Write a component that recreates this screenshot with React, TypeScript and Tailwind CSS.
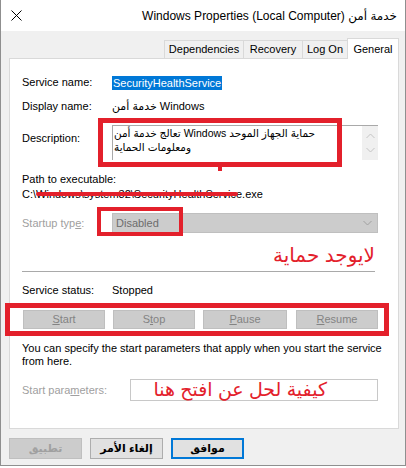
import React from "react";

const Btn = ({ w, children }: { w: string; children: React.ReactNode }) => (
  <div
    className={`${w} h-[19px] bg-[#cccccc] border border-[#bfbfbf] flex items-center justify-center text-[#838383]`}
  >
    {children}
  </div>
);

const App = () => {
  return (
    <div className="relative w-[406px] h-[468px] bg-white overflow-hidden text-[11px] text-black font-['Liberation_Sans','DejaVu_Sans',sans-serif]">
      <div className="h-[466px] bg-[#f0f0f0] border-x border-b border-[#8f8f8f] flex flex-col">
        {/* title bar */}
        <div className="h-[31px] bg-white flex items-center justify-between pl-[10px] pr-[8px]">
          <svg width="11" height="11" viewBox="0 0 11 11" className="mt-[-1px]">
            <path d="M0.5 0.5 L10.5 10.5 M10.5 0.5 L0.5 10.5" stroke="#000" strokeWidth="1" />
          </svg>
          <div className="text-[12px] leading-[16px]">
            Windows Properties (Local Computer) <span>خدمة أمن</span>
          </div>
        </div>

        {/* tabs */}
        <div className="h-[27px] flex items-end justify-end mr-[6px]">
          <div className="w-[79px] h-[18px] bg-[#f0f0f0] border-t border-l border-[#d9d9d9] flex items-center justify-center">
            Dependencies
          </div>
          <div className="w-[59px] h-[18px] bg-[#f0f0f0] border-t border-l border-[#d9d9d9] flex items-center justify-center">
            Recovery
          </div>
          <div className="w-[45px] h-[18px] bg-[#f0f0f0] border-t border-l border-[#d9d9d9] flex items-center justify-center">
            Log On
          </div>
          <div className="relative z-10 -mb-px w-[52px] h-[21px] bg-white border-t border-x border-[#d9d9d9] flex items-start justify-center pt-[2px]">
            General
          </div>
        </div>

        {/* panel */}
        <div className="ml-[8px] mr-[6px] h-[371px] bg-white border border-[#d9d9d9] pl-[12px] pr-[20px] pt-[16px]">
          <div className="flex h-[15px] items-center">
            <div className="w-[90px]">Service name:</div>
            <span className="bg-[#0078d7] text-white leading-[14px] px-[1px]">SecurityHealthService</span>
          </div>
          <div className="flex h-[15px] items-center mt-[9px]">
            <div className="w-[90px]">Display name:</div>
            <div>خدمة أمن Windows</div>
          </div>

          <div className="flex mt-[11px]">
            <div className="w-[90px] pt-[5px]">Description:</div>
            <div className="w-[266px] h-[35px] border-t border-l border-[#a9a9a9] flex">
              <div className="flex-1 pl-[1px] leading-[14px] text-[10.5px]">
                <div>تعالج خدمة أمن Windows حماية الجهاز الموحد</div>
                <div>ومعلومات الحماية</div>
              </div>
              <div className="w-[16px] bg-[#f0f0f0] flex flex-col items-center justify-around py-[3px]">
                <svg width="9" height="6" viewBox="0 0 9 6">
                  <path d="M0.5 5 L4.5 1 L8.5 5" fill="none" stroke="#c4c4c4" strokeWidth="1" />
                </svg>
                <svg width="9" height="6" viewBox="0 0 9 6">
                  <path d="M0.5 1 L4.5 5 L8.5 1" fill="none" stroke="#c4c4c4" strokeWidth="1" />
                </svg>
              </div>
            </div>
          </div>

          <div className="h-[15px] flex items-center mt-[12px]">Path to executable:</div>
          <div className="h-[15px] flex items-center">C:\Windows\system32\SecurityHealthService.exe</div>

          <div className="flex h-[20px] items-center mt-[11px]">
            <div className="w-[90px] text-[#a0a0a0]">
              Startup typ<u>e</u>:
            </div>
            <div className="w-[266px] h-[20px] bg-[#cccccc] border border-[#bfbfbf] flex items-center justify-between pl-[3px] pr-[5px]">
              <span className="text-[#6d6d6d]">Disabled</span>
              <svg width="9" height="6" viewBox="0 0 9 6">
                <path d="M0.5 1 L4.5 5 L8.5 1" fill="none" stroke="#a0a0a0" strokeWidth="1" />
              </svg>
            </div>
          </div>

          <div className="h-[20px] mt-[12px] flex items-center justify-end pr-[3px] text-[20px] leading-[20px] text-[#e3202b]">
            لايوجد حماية
          </div>

          <div className="mt-[6px] w-[353px] h-px bg-[#a9a9a9]" />

          <div className="flex h-[15px] items-center mt-[11px]">
            <div className="w-[90px]">Service status:</div>
            <div>Stopped</div>
          </div>

          <div className="flex mt-[12px] ml-[1px]">
            <Btn w="w-[82px]">
              <span>
                <u>S</u>tart
              </span>
            </Btn>
            <div className="w-[8px]" />
            <Btn w="w-[82px]">
              <span>
                S<u>t</u>op
              </span>
            </Btn>
            <div className="w-[8px]" />
            <Btn w="w-[84px]">
              <span>
                <u>P</u>ause
              </span>
            </Btn>
            <div className="w-[9px]" />
            <Btn w="w-[82px]">
              <span>
                <u>R</u>esume
              </span>
            </Btn>
          </div>

          <div className="mt-[13px] leading-[13px] w-[372px]">
            You can specify the start parameters that apply when you start the service from here.
          </div>

          <div className="flex h-[22px] items-center mt-[11px]">
            <div className="w-[108px] text-[#a0a0a0]">
              Start para<u>m</u>eters:
            </div>
            <div
              dir="rtl"
              className="flex-1 h-[22px] border border-[#c8c8c8] bg-white flex items-center pr-[50px] text-[19px] leading-[20px] text-[#e3202b]"
            >
              كيفية لحل عن افتح هنا
            </div>
          </div>
        </div>

        {/* bottom buttons */}
        <div className="flex mt-[9px] pl-[8px] gap-[8px] font-bold text-[11px]">
          <div className="w-[73px] h-[21px] bg-[#cccccc] border border-[#bfbfbf] flex items-center justify-center text-[#a0a0a0]">
            تطبيق
          </div>
          <div className="w-[73px] h-[21px] bg-[#e1e1e1] border border-[#adadad] flex items-center justify-center">
            إلغاء الأمر
          </div>
          <div className="w-[73px] h-[21px] bg-[#e1e1e1] border-2 border-[#0078d7] flex items-center justify-center">
            موافق
          </div>
        </div>
      </div>

      {/* red annotations */}
      <div className="absolute left-[98px] top-[118px] w-[244px] h-[49px] border-[5px] border-[#e3202b]" />
      <div className="absolute left-[218px] top-[166px] w-[4px] h-[5px] bg-[#e3202b]" />
      <div className="absolute left-[36px] top-[192px] w-[202px] h-[4px] rounded-full bg-[#e3202b]" />
      <div className="absolute left-[97px] top-[207px] w-[86px] h-[29px] border-[4px] border-[#e3202b]" />
      <div className="absolute left-[5px] top-[303px] w-[384px] h-[33px] border-[5px] border-[#e3202b]" />
    </div>
  );
};

export default App;
